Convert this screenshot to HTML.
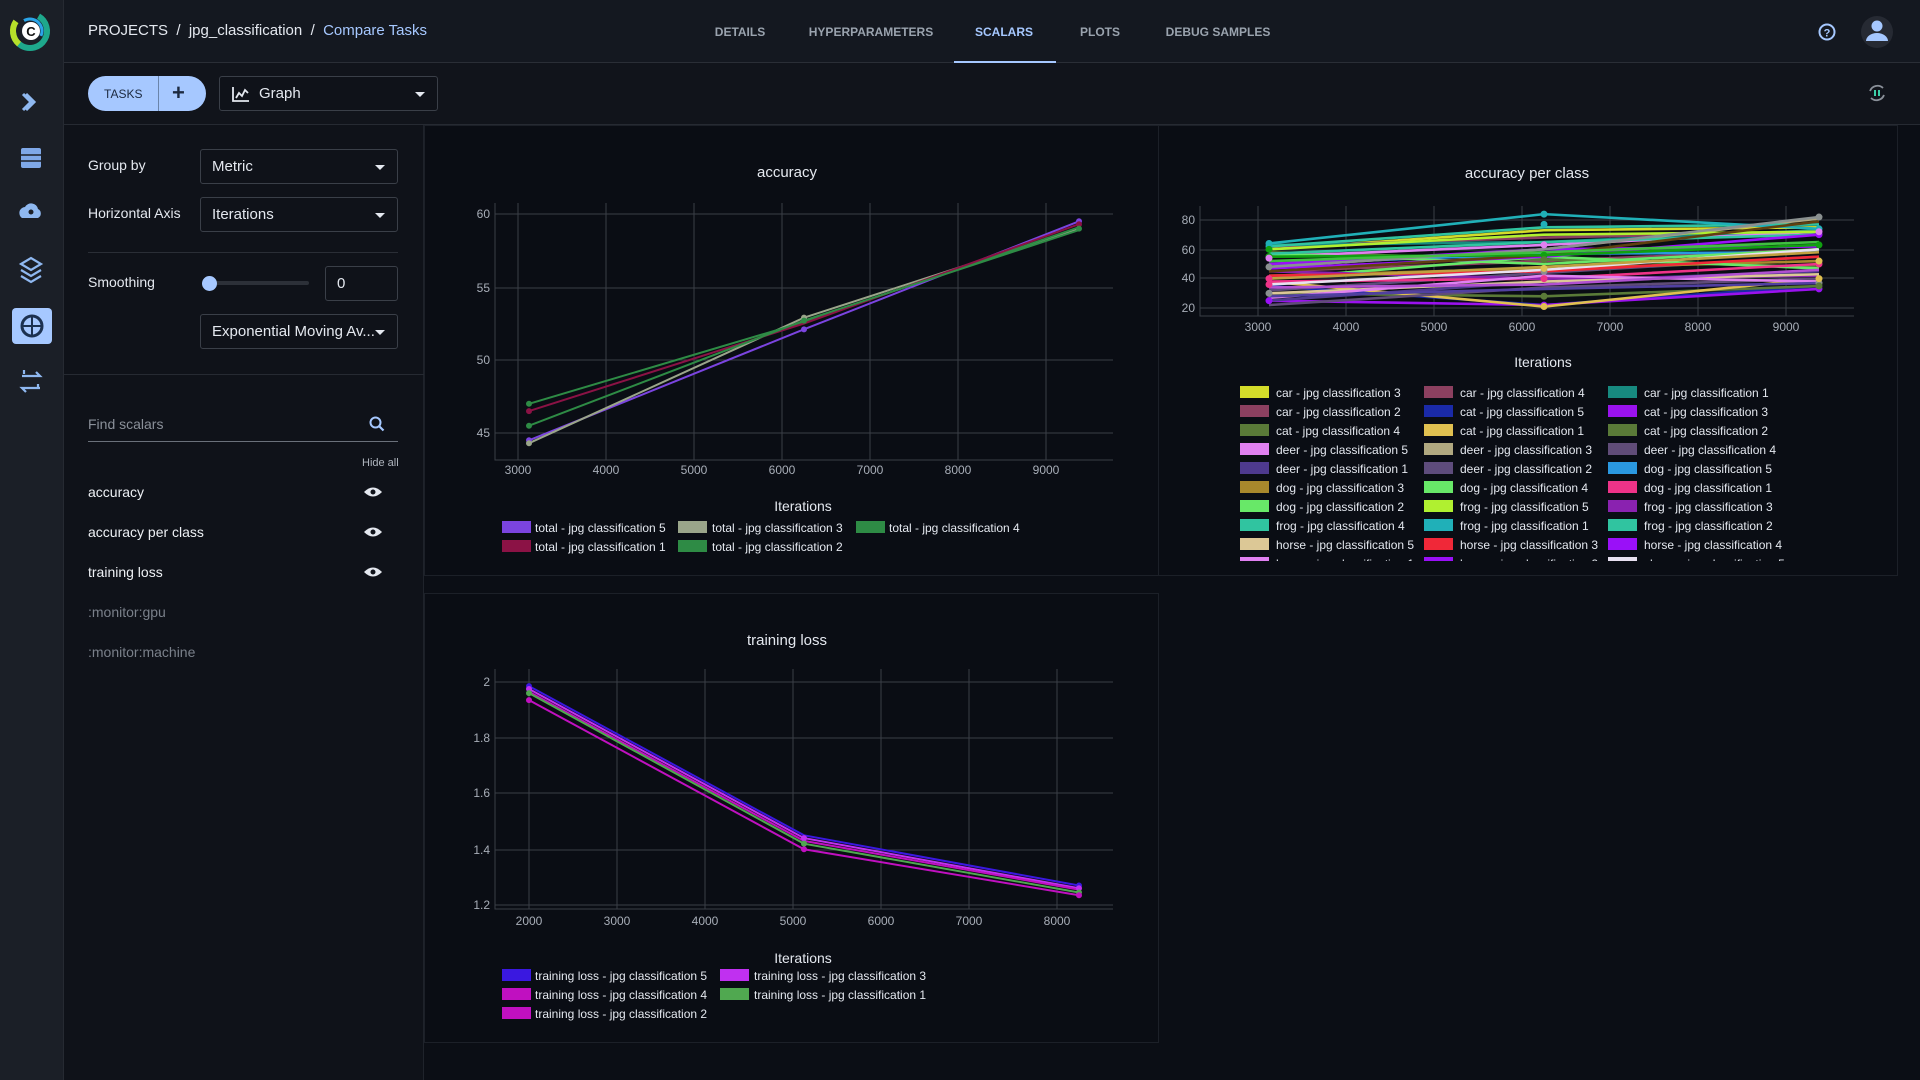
<!DOCTYPE html>
<html><head><meta charset="utf-8">
<style>
*{margin:0;padding:0;box-sizing:border-box}
body{width:1920px;height:1080px;background:#0b0e15;font-family:"Liberation Sans",sans-serif;color:#dfe3ea;position:relative;overflow:hidden}
.abs{position:absolute}
#side{left:0;top:0;width:64px;height:1080px;background:#1b1f27;border-right:1px solid #262a32}
#head{left:64px;top:0;width:1856px;height:63px;background:#141820;border-bottom:1px solid #2a2e36}
#tool{left:64px;top:63px;width:1856px;height:62px;background:#11141b;border-bottom:1px solid #262a32}
#left{left:64px;top:125px;width:360px;height:955px;background:#0f1219;border-right:1px solid #1f232b}
.crumb{top:22px;font-size:15px;color:#e4e8ef}
.tab{top:25px;font-size:12px;font-weight:bold;color:#9aa3ae;transform:translateX(-50%)}
.sel{border:1px solid #3a3f48;border-radius:3px;height:35px;font-size:15px;color:#e4e8ef;padding:8px 11px;background:#0f1219}
.sel:after{content:"";position:absolute;right:12px;top:15px;border-left:5px solid transparent;border-right:5px solid transparent;border-top:5px solid #e4e8ef}
.sel.n:after{display:none}
.lbl{font-size:14px;color:#e4e8ef}
.item{left:88px;font-size:14px;color:#eef1f5}
.panel{border:1px solid #1c2028;background:#0a0d14}
svg text{font-family:"Liberation Sans",sans-serif}
</style></head><body>
<div id="side" class="abs">
<svg width="64" height="400" class="abs" style="left:0;top:0">
 <circle cx="30" cy="31" r="17" fill="none" stroke="#1ea88c" stroke-width="6" stroke-dasharray="70 40" transform="rotate(-60 30 31)"/>
 <circle cx="30" cy="31" r="17" fill="none" stroke="#b6e02a" stroke-width="6" stroke-dasharray="25 90" transform="rotate(130 30 31)"/>
 <circle cx="30" cy="31" r="12" fill="none" stroke="#2aa4e8" stroke-width="3" stroke-dasharray="30 50" transform="rotate(-120 30 31)"/>
 <circle cx="31" cy="31" r="9" fill="#fff"/>
 <text x="31" y="36" font-size="13" font-weight="bold" text-anchor="middle" fill="#111">C</text>
 <path d="M23 94 l8 8 -8 8 M26 94 l8 8 -8 8" fill="none" stroke="#8fb8f0" stroke-width="3"/>
 <rect x="21" y="148" width="20" height="20" rx="2" fill="#7fa8e8"/>
 <path d="M21 155h20M21 161h20" stroke="#1b1f27" stroke-width="1.5"/>
 <path d="M22 218a6 6 0 0 1 3-11a7 7 0 0 1 13 2a5 5 0 0 1 0 9z" fill="#8fb8f0"/>
 <circle cx="31" cy="212" r="2.5" fill="#1b1f27"/>
 <path d="M21 264l10-6 10 6-10 6z M21 270l10 6 10-6 M21 276l10 6 10-6" fill="none" stroke="#8fb8f0" stroke-width="2.2"/>
 <rect x="12" y="308" width="40" height="36" rx="4" fill="#a6c8ff"/>
 <circle cx="32" cy="326" r="10" fill="none" stroke="#1c3150" stroke-width="3"/>
 <path d="M32 316v20M23 326h18" stroke="#1c3150" stroke-width="2"/>
 <path d="M22 376h18l-4-4M40 388H22l4 4M24 370v4M38 384v4" fill="none" stroke="#8fb8f0" stroke-width="2.2"/>
</svg>
</div>
<div id="head" class="abs"></div>
<div class="abs crumb" style="left:88px">PROJECTS&nbsp; /&nbsp; jpg_classification&nbsp; /&nbsp; <span style="color:#a6c8ff">Compare Tasks</span></div>
<div class="abs tab" style="left:740px">DETAILS</div>
<div class="abs tab" style="left:871px">HYPERPARAMETERS</div>
<div class="abs tab" style="left:1004px;color:#a6c8ff">SCALARS</div>
<div class="abs tab" style="left:1100px">PLOTS</div>
<div class="abs tab" style="left:1218px">DEBUG SAMPLES</div>
<div class="abs" style="left:954px;top:61px;width:102px;height:3px;background:#a6c8ff"></div>
<svg class="abs" style="left:1810px;top:12px" width="100" height="42">
 <circle cx="17" cy="20" r="7.5" fill="none" stroke="#a6c8ff" stroke-width="2"/>
 <text x="17" y="24.5" font-size="11" font-weight="bold" text-anchor="middle" fill="#a6c8ff">?</text>
 <circle cx="67" cy="20" r="16" fill="#262a33"/>
 <circle cx="67" cy="14" r="5.5" fill="#a6c8ff"/>
 <path d="M56 29a11 8 0 0 1 22 0z" fill="#a6c8ff"/>
</svg>
<div id="tool" class="abs"></div>
<div class="abs" style="left:88px;top:76px;width:118px;height:35px;border-radius:18px;background:#a6c8ff"></div>
<div class="abs" style="left:104px;top:87px;font-size:12px;color:#1c2a40">TASKS</div>
<div class="abs" style="left:158px;top:76px;width:1px;height:35px;background:#6a84aa"></div>
<div class="abs" style="left:172px;top:80px;font-size:22px;color:#1c2a40;font-weight:bold">+</div>
<div class="abs sel" style="left:219px;top:76px;width:219px;padding-left:39px">Graph</div>
<svg class="abs" style="left:231px;top:85px" width="20" height="18"><path d="M2 2v14h16M5 13l3-5 3 3 3-6 3 3" fill="none" stroke="#e4e8ef" stroke-width="1.8"/></svg>
<svg class="abs" style="left:1866px;top:82px" width="22" height="22"><path d="M17 6a8 8 0 0 0-13 3M5 16a8 8 0 0 0 13-3" fill="none" stroke="#8a9099" stroke-width="1.8"/><path d="M9 8v6M13 8v6" stroke="#3cd0a8" stroke-width="2"/></svg>

<div id="left" class="abs"></div>
<div class="abs lbl" style="left:88px;top:157px">Group by</div>
<div class="abs sel" style="left:200px;top:149px;width:198px">Metric</div>
<div class="abs lbl" style="left:88px;top:205px">Horizontal Axis</div>
<div class="abs sel" style="left:200px;top:197px;width:198px">Iterations</div>
<div class="abs" style="left:88px;top:252px;width:310px;height:1px;background:#2a2e36"></div>
<div class="abs lbl" style="left:88px;top:274px">Smoothing</div>
<div class="abs" style="left:209px;top:281px;width:100px;height:4px;border-radius:2px;background:#2c3038"></div>
<div class="abs" style="left:202px;top:276px;width:15px;height:15px;border-radius:50%;background:#a6c8ff"></div>
<div class="abs sel n" style="left:325px;top:266px;width:73px;height:35px">0</div>
<div class="abs sel" style="left:200px;top:314px;width:198px">Exponential Moving Av...</div>
<div class="abs" style="left:64px;top:374px;width:360px;height:1px;background:#262a32"></div>
<div class="abs" style="left:88px;top:416px;font-size:14px;color:#8a9099">Find scalars</div>
<svg class="abs" style="left:368px;top:415px" width="18" height="18"><circle cx="7.5" cy="7.5" r="5" fill="none" stroke="#a6c8ff" stroke-width="2"/><path d="M11 11l4.5 4.5" stroke="#a6c8ff" stroke-width="2.2"/></svg>
<div class="abs" style="left:88px;top:441px;width:310px;height:1px;background:#6a707a"></div>
<div class="abs" style="left:362px;top:457px;font-size:11px;color:#b0b6bf">Hide all</div>
<div class="abs item" style="top:484px">accuracy</div>
<div class="abs item" style="top:524px">accuracy per class</div>
<div class="abs item" style="top:564px">training loss</div>
<div class="abs item" style="top:604px;color:#7a808a">:monitor:gpu</div>
<div class="abs item" style="top:644px;color:#7a808a">:monitor:machine</div>
<svg class="abs" style="left:363px;top:484px" width="20" height="100">
 <g fill="#e4e8ef"><path d="M1 8q9-9 18 0q-9 9-18 0z"/><path d="M1 48q9-9 18 0q-9 9-18 0z"/><path d="M1 88q9-9 18 0q-9 9-18 0z"/></g>
 <g fill="#0f1219"><circle cx="10" cy="8" r="2.5"/><circle cx="10" cy="48" r="2.5"/><circle cx="10" cy="88" r="2.5"/></g>
</svg>

<div class="abs panel" style="left:424px;top:125px;width:735px;height:451px"></div>
<div class="abs panel" style="left:1158px;top:125px;width:740px;height:451px"></div>
<div class="abs panel" style="left:424px;top:593px;width:735px;height:450px"></div>

<svg class="abs" style="left:0;top:0" width="1920" height="1080">
<g stroke="#3a3e46" stroke-width="1" fill="none">
 <path d="M495 203V460H1113M495 214H1113M495 288H1113M495 360H1113M495 433H1113"/>
 <path d="M518 203V460M606 203V460M694 203V460M782 203V460M870 203V460M958 203V460M1046 203V460"/>
 <path d="M1200 206V316H1854M1200 220H1854M1200 250H1854M1200 278H1854M1200 308H1854"/>
 <path d="M1258 206V316M1346 206V316M1434 206V316M1522 206V316M1610 206V316M1698 206V316M1786 206V316"/>
 <path d="M495 669V909H1113M495 682H1113M495 738H1113M495 793H1113M495 850H1113M495 905H1113"/>
 <path d="M529 669V909M617 669V909M705 669V909M793 669V909M881 669V909M969 669V909M1057 669V909"/>
</g>
<g font-size="12" fill="#a8aeb8">
 <g text-anchor="end"><text x="490" y="218">60</text><text x="490" y="292">55</text><text x="490" y="364">50</text><text x="490" y="437">45</text>
 <text x="1195" y="224">80</text><text x="1195" y="254">60</text><text x="1195" y="282">40</text><text x="1195" y="312">20</text>
 <text x="490" y="686">2</text><text x="490" y="742">1.8</text><text x="490" y="797">1.6</text><text x="490" y="854">1.4</text><text x="490" y="909">1.2</text></g>
 <g text-anchor="middle"><text x="518" y="474">3000</text><text x="606" y="474">4000</text><text x="694" y="474">5000</text><text x="782" y="474">6000</text><text x="870" y="474">7000</text><text x="958" y="474">8000</text><text x="1046" y="474">9000</text>
 <text x="1258" y="331">3000</text><text x="1346" y="331">4000</text><text x="1434" y="331">5000</text><text x="1522" y="331">6000</text><text x="1610" y="331">7000</text><text x="1698" y="331">8000</text><text x="1786" y="331">9000</text>
 <text x="529" y="925">2000</text><text x="617" y="925">3000</text><text x="705" y="925">4000</text><text x="793" y="925">5000</text><text x="881" y="925">6000</text><text x="969" y="925">7000</text><text x="1057" y="925">8000</text></g>
</g>
<g font-size="15" fill="#e4e8ef" text-anchor="middle">
 <text x="787" y="177">accuracy</text><text x="1527" y="178">accuracy per class</text><text x="787" y="645">training loss</text>
 <text x="803" y="511" font-size="14">Iterations</text><text x="1543" y="367" font-size="14">Iterations</text><text x="803" y="963" font-size="14">Iterations</text>
</g>
<g transform="matrix(88 0 0 -14.6 254 1090)" fill="none" stroke-width="2">
 <polyline vector-effect="non-scaling-stroke" stroke="#7b44e0" points="3.125,44.5 6.25,52.1 9.375,59.5"/>
 <polyline vector-effect="non-scaling-stroke" stroke="#9aa58a" points="3.125,44.3 6.25,52.9 9.375,59.0"/>
 <polyline vector-effect="non-scaling-stroke" stroke="#2e8b45" points="3.125,47.0 6.25,52.6 9.375,59.1"/>
 <polyline vector-effect="non-scaling-stroke" stroke="#8b1245" points="3.125,46.5 6.25,52.5 9.375,59.3"/>
 <polyline vector-effect="non-scaling-stroke" stroke="#2e8b45" points="3.125,45.5 6.25,52.7 9.375,58.9"/>
 <g stroke-width="6" stroke-linecap="round">
 <path vector-effect="non-scaling-stroke" stroke="#7b44e0" d="M3.125 44.5h0M6.25 52.1h0M9.375 59.5h0"/>
 <path vector-effect="non-scaling-stroke" stroke="#9aa58a" d="M3.125 44.3h0M6.25 52.9h0"/>
 <path vector-effect="non-scaling-stroke" stroke="#8b1245" d="M3.125 46.5h0M9.375 59.3h0"/>
 <path vector-effect="non-scaling-stroke" stroke="#2e8b45" d="M3.125 47h0M3.125 45.5h0M6.25 52.7h0M9.375 59h0"/>
 </g>
</g>
<g transform="matrix(88 0 0 -1.4667 994 337.33)" fill="none" stroke-width="2.6">
 <polyline vector-effect="non-scaling-stroke" stroke="#d4dc2a" points="3.125,60 6.25,73 9.375,75"/>
 <polyline vector-effect="non-scaling-stroke" stroke="#8c4060" points="3.125,62 6.25,68 9.375,72"/>
 <polyline vector-effect="non-scaling-stroke" stroke="#178a80" points="3.125,63 6.25,65 9.375,73"/>
 <polyline vector-effect="non-scaling-stroke" stroke="#8c4060" points="3.125,45 6.25,52 9.375,60"/>
 <polyline vector-effect="non-scaling-stroke" stroke="#1a2aa8" points="3.125,35 6.25,22 9.375,35"/>
 <polyline vector-effect="non-scaling-stroke" stroke="#9a12ee" points="3.125,25 6.25,22 9.375,33"/>
 <polyline vector-effect="non-scaling-stroke" stroke="#5a7a38" points="3.125,30 6.25,28 9.375,35"/>
 <polyline vector-effect="non-scaling-stroke" stroke="#e0c050" points="3.125,38 6.25,21 9.375,40"/>
 <polyline vector-effect="non-scaling-stroke" stroke="#5a7a38" points="3.125,58 6.25,53 9.375,48"/>
 <polyline vector-effect="non-scaling-stroke" stroke="#e080f0" points="3.125,55 6.25,63 9.375,72"/>
 <polyline vector-effect="non-scaling-stroke" stroke="#b0a880" points="3.125,48 6.25,60 9.375,81"/>
 <polyline vector-effect="non-scaling-stroke" stroke="#604c78" points="3.125,22 6.25,34 9.375,40"/>
 <polyline vector-effect="non-scaling-stroke" stroke="#4e3a8e" points="3.125,25 6.25,38 9.375,45"/>
 <polyline vector-effect="non-scaling-stroke" stroke="#5e4c7c" points="3.125,32 6.25,44 9.375,55"/>
 <polyline vector-effect="non-scaling-stroke" stroke="#2a98e0" points="3.125,50 6.25,57 9.375,58"/>
 <polyline vector-effect="non-scaling-stroke" stroke="#a8882c" points="3.125,42 6.25,47 9.375,52"/>
 <polyline vector-effect="non-scaling-stroke" stroke="#68e868" points="3.125,40 6.25,55 9.375,47"/>
 <polyline vector-effect="non-scaling-stroke" stroke="#ee3388" points="3.125,38 6.25,40 9.375,50"/>
 <polyline vector-effect="non-scaling-stroke" stroke="#68e868" points="3.125,57 6.25,50 9.375,60"/>
 <polyline vector-effect="non-scaling-stroke" stroke="#b0f030" points="3.125,60 6.25,70 9.375,72"/>
 <polyline vector-effect="non-scaling-stroke" stroke="#8a22b0" points="3.125,45 6.25,40 9.375,42"/>
 <polyline vector-effect="non-scaling-stroke" stroke="#30c4a0" points="3.125,62 6.25,75 9.375,77"/>
 <polyline vector-effect="non-scaling-stroke" stroke="#20b0b8" points="3.125,64 6.25,84 9.375,74"/>
 <polyline vector-effect="non-scaling-stroke" stroke="#30c4a0" points="3.125,57 6.25,65 9.375,70"/>
 <polyline vector-effect="non-scaling-stroke" stroke="#dcc896" points="3.125,30 6.25,38 9.375,43"/>
 <polyline vector-effect="non-scaling-stroke" stroke="#f02838" points="3.125,42 6.25,45 9.375,55"/>
 <polyline vector-effect="non-scaling-stroke" stroke="#9a10f8" points="3.125,47 6.25,55 9.375,70"/>
 <polyline vector-effect="non-scaling-stroke" stroke="#e080f0" points="3.125,27 6.25,42 9.375,38"/>
 <polyline vector-effect="non-scaling-stroke" stroke="#9a10f8" points="3.125,50 6.25,60 9.375,62"/>
 <polyline vector-effect="non-scaling-stroke" stroke="#e8e0f0" points="3.125,36 6.25,46 9.375,60"/>
 <polyline vector-effect="non-scaling-stroke" stroke="#604010" points="3.125,45 6.25,56 9.375,79"/>
 <polyline vector-effect="non-scaling-stroke" stroke="#10a010" points="3.125,55 6.25,56 9.375,63"/>
 <polyline vector-effect="non-scaling-stroke" stroke="#8a9090" points="3.125,48 6.25,60 9.375,82"/>
 <polyline vector-effect="non-scaling-stroke" stroke="#c0a040" points="3.125,40 6.25,48 9.375,58"/>
 <polyline vector-effect="non-scaling-stroke" stroke="#5040a0" points="3.125,28 6.25,33 9.375,37"/>
 <polyline vector-effect="non-scaling-stroke" stroke="#40c040" points="3.125,52 6.25,58 9.375,65"/>
 <polyline vector-effect="non-scaling-stroke" stroke="#b050d0" points="3.125,34 6.25,36 9.375,46"/>
 <g stroke-width="7" stroke-linecap="round">
 <path vector-effect="non-scaling-stroke" stroke="#20b0b8" d="M3.125 64h0M6.25 84h0M9.375 74h0M3.125 62h0M6.25 77h0"/>
 <path vector-effect="non-scaling-stroke" stroke="#10a010" d="M3.125 55h0M6.25 56h0M9.375 63h0M3.125 60h0"/>
 <path vector-effect="non-scaling-stroke" stroke="#8a9090" d="M3.125 48h0M9.375 82h0M6.25 45h0M9.375 37h0M3.125 30h0"/>
 <path vector-effect="non-scaling-stroke" stroke="#ee3388" d="M3.125 40h0M6.25 40h0M9.375 50h0M3.125 36h0"/>
 <path vector-effect="non-scaling-stroke" stroke="#9a10f8" d="M3.125 25h0M6.25 22h0M9.375 33h0M9.375 70h0"/>
 <path vector-effect="non-scaling-stroke" stroke="#e0c050" d="M6.25 21h0M9.375 40h0M6.25 47h0M9.375 52h0"/>
 <path vector-effect="non-scaling-stroke" stroke="#e080f0" d="M6.25 63h0M9.375 72h0M3.125 54h0"/>
 <path vector-effect="non-scaling-stroke" stroke="#5a7a38" d="M6.25 28h0M9.375 35h0M6.25 53h0"/>
 </g>
</g>
<g transform="matrix(88 0 0 -278.75 353 1239.5)" fill="none" stroke-width="2">
 <polyline vector-effect="non-scaling-stroke" stroke="#3a18e0" points="2,1.985 5.125,1.45 8.25,1.27"/>
 <polyline vector-effect="non-scaling-stroke" stroke="#c030f0" points="2,1.975 5.125,1.44 8.25,1.26"/>
 <polyline vector-effect="non-scaling-stroke" stroke="#c010c0" points="2,1.965 5.125,1.43 8.25,1.255"/>
 <polyline vector-effect="non-scaling-stroke" stroke="#50a850" points="2,1.96 5.125,1.42 8.25,1.245"/>
 <polyline vector-effect="non-scaling-stroke" stroke="#c010c0" points="2,1.935 5.125,1.40 8.25,1.235"/>
 <g stroke-width="6" stroke-linecap="round">
 <path vector-effect="non-scaling-stroke" stroke="#3a18e0" d="M2 1.985h0M8.25 1.27h0"/>
 <path vector-effect="non-scaling-stroke" stroke="#c030f0" d="M2 1.975h0M5.125 1.44h0M8.25 1.26h0"/>
 <path vector-effect="non-scaling-stroke" stroke="#50a850" d="M2 1.96h0M5.125 1.42h0M8.25 1.245h0"/>
 <path vector-effect="non-scaling-stroke" stroke="#c010c0" d="M2 1.935h0M5.125 1.40h0M8.25 1.235h0"/>
 </g>
</g>
<g font-size="12" fill="#e4e8ef">
 <rect x="502" y="521" width="29" height="12" fill="#7b44e0"/><text x="535" y="532">total - jpg classification 5</text>
 <rect x="678" y="521" width="29" height="12" fill="#9aa58a"/><text x="712" y="532">total - jpg classification 3</text>
 <rect x="856" y="521" width="29" height="12" fill="#2e8b45"/><text x="889" y="532">total - jpg classification 4</text>
 <rect x="502" y="540" width="29" height="12" fill="#8b1245"/><text x="535" y="551">total - jpg classification 1</text>
 <rect x="678" y="540" width="29" height="12" fill="#2e8b45"/><text x="712" y="551">total - jpg classification 2</text>

 <rect x="502" y="969" width="29" height="12" fill="#3a18e0"/><text x="535" y="980">training loss - jpg classification 5</text>
 <rect x="720" y="969" width="29" height="12" fill="#c030f0"/><text x="754" y="980">training loss - jpg classification 3</text>
 <rect x="502" y="988" width="29" height="12" fill="#c010c0"/><text x="535" y="999">training loss - jpg classification 4</text>
 <rect x="720" y="988" width="29" height="12" fill="#50a850"/><text x="754" y="999">training loss - jpg classification 1</text>
 <rect x="502" y="1007" width="29" height="12" fill="#c010c0"/><text x="535" y="1018">training loss - jpg classification 2</text>
</g>
<clipPath id="lc"><rect x="1230" y="380" width="640" height="181"/></clipPath>
<g font-size="12" fill="#e4e8ef" clip-path="url(#lc)">
 <g transform="translate(1240 386)">
  <rect y="0" width="29" height="12" fill="#d4dc2a"/><text x="36" y="11">car - jpg classification 3</text>
  <rect y="19" width="29" height="12" fill="#8c4060"/><text x="36" y="30">car - jpg classification 2</text>
  <rect y="38" width="29" height="12" fill="#5a7a38"/><text x="36" y="49">cat - jpg classification 4</text>
  <rect y="57" width="29" height="12" fill="#e080f0"/><text x="36" y="68">deer - jpg classification 5</text>
  <rect y="76" width="29" height="12" fill="#4e3a8e"/><text x="36" y="87">deer - jpg classification 1</text>
  <rect y="95" width="29" height="12" fill="#a8882c"/><text x="36" y="106">dog - jpg classification 3</text>
  <rect y="114" width="29" height="12" fill="#68e868"/><text x="36" y="125">dog - jpg classification 2</text>
  <rect y="133" width="29" height="12" fill="#30c4a0"/><text x="36" y="144">frog - jpg classification 4</text>
  <rect y="152" width="29" height="12" fill="#dcc896"/><text x="36" y="163">horse - jpg classification 5</text>
  <rect y="171" width="29" height="12" fill="#e080f0"/><text x="36" y="182">horse - jpg classification 1</text>
 </g>
 <g transform="translate(1424 386)">
  <rect y="0" width="29" height="12" fill="#8c4060"/><text x="36" y="11">car - jpg classification 4</text>
  <rect y="19" width="29" height="12" fill="#1a2aa8"/><text x="36" y="30">cat - jpg classification 5</text>
  <rect y="38" width="29" height="12" fill="#e0c050"/><text x="36" y="49">cat - jpg classification 1</text>
  <rect y="57" width="29" height="12" fill="#b0a880"/><text x="36" y="68">deer - jpg classification 3</text>
  <rect y="76" width="29" height="12" fill="#5e4c7c"/><text x="36" y="87">deer - jpg classification 2</text>
  <rect y="95" width="29" height="12" fill="#68e868"/><text x="36" y="106">dog - jpg classification 4</text>
  <rect y="114" width="29" height="12" fill="#b0f030"/><text x="36" y="125">frog - jpg classification 5</text>
  <rect y="133" width="29" height="12" fill="#20b0b8"/><text x="36" y="144">frog - jpg classification 1</text>
  <rect y="152" width="29" height="12" fill="#f02838"/><text x="36" y="163">horse - jpg classification 3</text>
  <rect y="171" width="29" height="12" fill="#9a10f8"/><text x="36" y="182">horse - jpg classification 2</text>
 </g>
 <g transform="translate(1608 386)">
  <rect y="0" width="29" height="12" fill="#178a80"/><text x="36" y="11">car - jpg classification 1</text>
  <rect y="19" width="29" height="12" fill="#9a12ee"/><text x="36" y="30">cat - jpg classification 3</text>
  <rect y="38" width="29" height="12" fill="#5a7a38"/><text x="36" y="49">cat - jpg classification 2</text>
  <rect y="57" width="29" height="12" fill="#604c78"/><text x="36" y="68">deer - jpg classification 4</text>
  <rect y="76" width="29" height="12" fill="#2a98e0"/><text x="36" y="87">dog - jpg classification 5</text>
  <rect y="95" width="29" height="12" fill="#ee3388"/><text x="36" y="106">dog - jpg classification 1</text>
  <rect y="114" width="29" height="12" fill="#8a22b0"/><text x="36" y="125">frog - jpg classification 3</text>
  <rect y="133" width="29" height="12" fill="#30c4a0"/><text x="36" y="144">frog - jpg classification 2</text>
  <rect y="152" width="29" height="12" fill="#9a10f8"/><text x="36" y="163">horse - jpg classification 4</text>
  <rect y="171" width="29" height="12" fill="#e8e0f0"/><text x="36" y="182">sheep - jpg classification 5</text>
 </g>
</g>
</svg>
</body></html>
